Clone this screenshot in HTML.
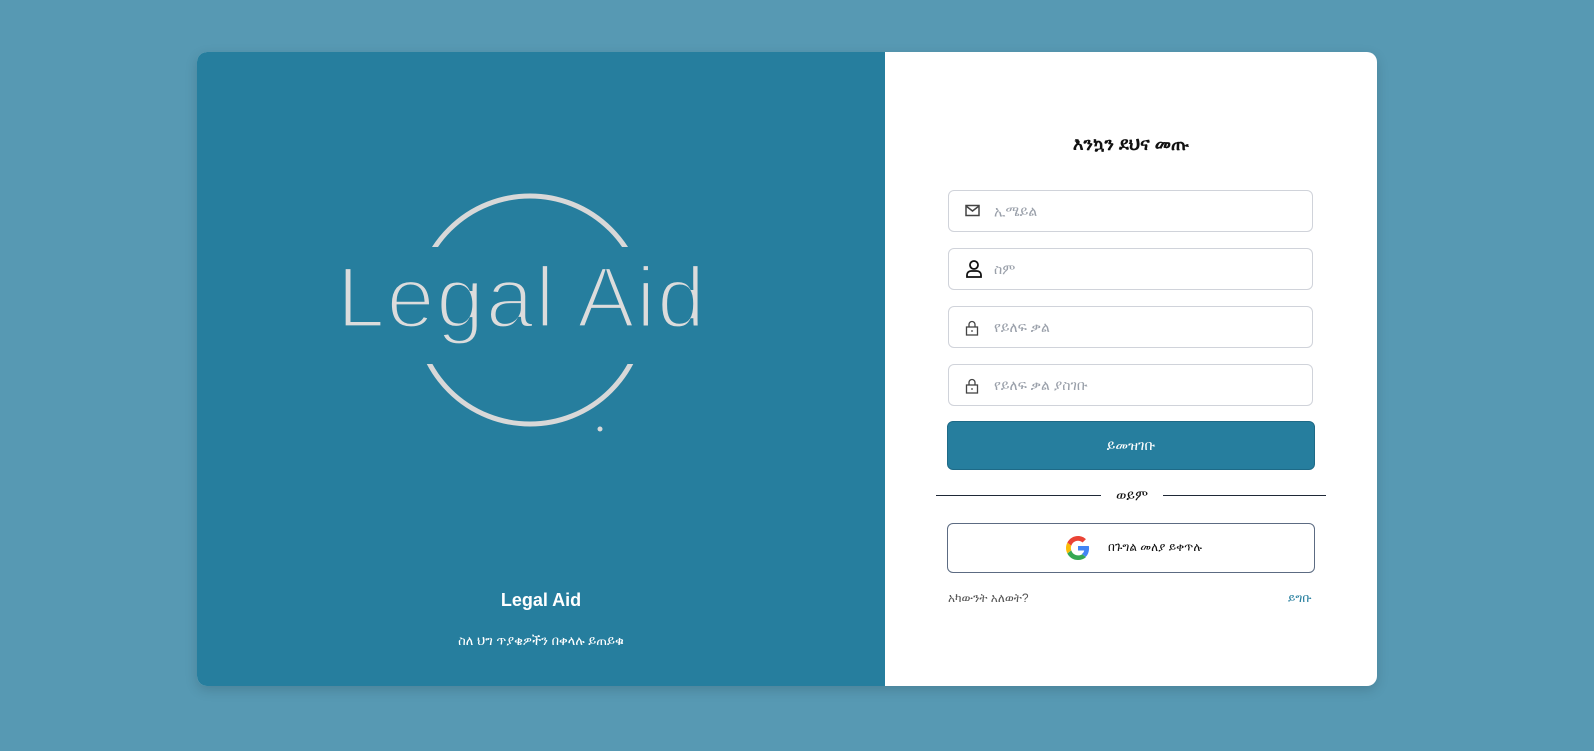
<!DOCTYPE html>
<html><head><meta charset="utf-8"><style>
*{box-sizing:border-box;margin:0;padding:0}
body{width:1594px;height:751px;background:#5799b3;font-family:"Liberation Sans","DejaVu Sans",sans-serif;position:relative;overflow:hidden}
.card{position:absolute;left:197px;top:52px;width:1180px;height:634px;border-radius:10px;overflow:hidden;box-shadow:0 4px 12px rgba(0,0,0,.15);background:#fff}
.left{position:absolute;left:0;top:0;width:688px;height:634px;background:#267e9e}
.abs{position:absolute}
.inp{position:absolute;left:751px;width:365px;height:42px;border:1px solid #d0d3da;border-radius:6px;background:#fff}
.inp span{position:absolute;left:45px;top:12px;font-size:14px;color:#9aa0aa}
.inp svg{position:absolute;left:16px;top:13px}
</style></head><body>
<div class="card">
 <div class="left">
  <svg class="abs" style="left:0;top:0" width="688" height="634">
   <defs><clipPath id="c"><rect x="0" y="139" width="688" height="56"/><rect x="0" y="312" width="688" height="100"/></clipPath></defs>
   <circle cx="333" cy="258" r="114" fill="none" stroke="#d8d8d8" stroke-width="5" clip-path="url(#c)"/>
   <circle cx="403" cy="377" r="2.5" fill="#d8d8d8"/>
   <text x="140" y="275" font-family="Liberation Sans, sans-serif" font-size="86" fill="#dcdcdc" stroke="#267e9e" stroke-width="3.2" style="paint-order:normal" textLength="368" lengthAdjust="spacing">Legal Aid</text>
  </svg>
  <div class="abs" style="left:0;width:688px;top:538px;text-align:center;color:#fff;font-size:18px;font-weight:bold">Legal Aid</div>
  <div class="abs" style="left:0;width:688px;top:581px;text-align:center;color:#fff;font-size:13px">ስለ ህግ ጥያቄዎችን በቀላሉ ይጠይቁ</div>
 </div>
 <div class="abs" style="left:688px;width:492px;top:82px;text-align:center;font-size:18px;font-weight:bold;color:#111">እንኳን ደህና መጡ</div>
 <div class="inp" style="top:138px"><svg width="16" height="14" viewBox="0 0 16 14"><rect x="1" y="1.5" width="13" height="10" fill="none" stroke="#444" stroke-width="1.5"/><path d="M1 2l6.5 5 6.5-5" fill="none" stroke="#444" stroke-width="1.5"/></svg><span>ኢሜይል</span></div>
 <div class="inp" style="top:196px"><svg width="18" height="18" viewBox="0 0 18 18" style="top:11px"><circle cx="9" cy="5" r="4" fill="none" stroke="#111" stroke-width="1.8"/><path d="M2 17v-2a4 4 0 0 1 4-4h6a4 4 0 0 1 4 4v2z" fill="none" stroke="#111" stroke-width="1.8"/></svg><span>ስም</span></div>
 <div class="inp" style="top:254px"><svg width="14" height="16" viewBox="0 0 14 16"><rect x="1.5" y="7" width="11" height="8" fill="none" stroke="#444" stroke-width="1.3"/><path d="M4 7V4.5a3 3 0 0 1 6 0V7" fill="none" stroke="#444" stroke-width="1.3"/><circle cx="7" cy="11" r="0.9" fill="#444"/></svg><span>የይለፍ ቃል</span></div>
 <div class="inp" style="top:312px"><svg width="14" height="16" viewBox="0 0 14 16"><rect x="1.5" y="7" width="11" height="8" fill="none" stroke="#444" stroke-width="1.3"/><path d="M4 7V4.5a3 3 0 0 1 6 0V7" fill="none" stroke="#444" stroke-width="1.3"/><circle cx="7" cy="11" r="0.9" fill="#444"/></svg><span>የይለፍ ቃል ያስገቡ</span></div>
 <div class="abs" style="left:750px;top:369px;width:368px;height:49px;background:#267e9e;border-radius:6px;border:1px solid #1e6a87;color:#fff;font-size:14px;text-align:center;line-height:47px">ይመዝገቡ</div>
 <div class="abs" style="left:739px;top:443px;width:165px;height:1px;background:#1f2937"></div>
 <div class="abs" style="left:966px;top:443px;width:163px;height:1px;background:#1f2937"></div>
 <div class="abs" style="left:904px;width:62px;top:435px;text-align:center;font-size:14px;color:#111">ወይም</div>
 <div class="abs" style="left:750px;top:471px;width:368px;height:50px;border:1.3px solid #5c6b82;border-radius:6px">
  <svg class="abs" style="left:118px;top:12px" width="24" height="24" viewBox="0 0 48 48"><path fill="#EA4335" d="M24 9.5c3.5 0 6.6 1.2 9.1 3.6l6.8-6.8C35.8 2.4 30.3 0 24 0 14.6 0 6.6 5.4 2.6 13.3l7.9 6.2C12.4 13.7 17.7 9.5 24 9.5z"/><path fill="#4285F4" d="M46.1 24.5c0-1.6-.1-3.1-.4-4.5H24v9h12.4c-.5 2.9-2.2 5.3-4.6 7l7.5 5.8c4.4-4 6.8-10 6.8-17.3z"/><path fill="#FBBC05" d="M10.5 28.5c-.5-1.4-.8-2.9-.8-4.5s.3-3.1.8-4.5l-7.9-6.2C.9 16.6 0 20.2 0 24s.9 7.4 2.6 10.7l7.9-6.2z"/><path fill="#34A853" d="M24 48c6.5 0 11.9-2.1 15.9-5.8l-7.5-5.8c-2.1 1.4-4.8 2.3-8.4 2.3-6.3 0-11.6-4.2-13.5-10l-7.9 6.2C6.6 42.6 14.6 48 24 48z"/></svg>
  <div class="abs" style="left:160px;top:16px;font-size:12px;color:#111">በጉግል መለያ ይቀጥሉ</div>
 </div>
 <div class="abs" style="left:751px;top:539px;font-size:12px;color:#555">አካውንት አለወት?</div>
 <div class="abs" style="left:1091px;top:539px;font-size:12px;color:#267e9e">ይግቡ</div>
</div>
</body></html>
